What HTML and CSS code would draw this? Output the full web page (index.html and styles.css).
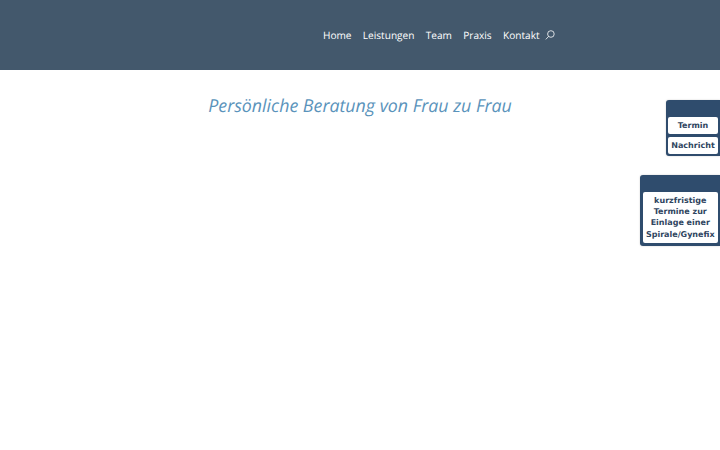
FILE: index.html
```
<!DOCTYPE html>
<html lang="de">
<head>
<meta charset="utf-8">
<title>Praxis</title>
<link rel="stylesheet" href="styles.css">
</head>
<body>
<header class="header">
  <nav class="nav">
    <a>Home</a>
    <a>Leistungen</a>
    <a>Team</a>
    <a>Praxis</a>
    <a>Kontakt</a>
    <svg class="search" width="10" height="10" viewBox="0 0 10 10" fill="none" stroke="#fff" stroke-width="0.8"><circle cx="5.9" cy="4" r="3.3"/><path d="M3.6 6.4 L0.8 9.4"/></svg>
  </nav>
</header>
<main>
  <h1 class="title">Persönliche Beratung von Frau zu Frau</h1>
</main>
<aside class="side side-a">
  <div class="box"><a>Termin</a><a>Nachricht</a></div>
</aside>
<aside class="side side-b">
  <div class="box"><a>kurzfristige Termine zur Einlage einer Spirale/Gynefix</a></div>
</aside>
</body>
</html>
```
FILE: styles.css
```
html, body { margin: 0; padding: 0; }
body { width: 720px; height: 450px; background: #fff; overflow: hidden; position: relative; font-family: "Open Sans", sans-serif; text-rendering: geometricPrecision; }
.header { height: 70px; background: #43586c; display: flex; }
.nav { display: flex; align-items: center; margin-left: 323px; gap: 11.3px; height: 70px; color: #fff; font-size: 10.1px; }
.search { margin-left: -6.3px; }
.title { margin: 24px 0 0; text-align: center; font-size: 17.8px; line-height: 24px; font-weight: 400; font-style: italic; color: #5a93bb; }
.side { position: absolute; right: 0; background: #2f4c6d; border-radius: 3px 0 0 3px; padding: 17px 2px 3px 2.5px; box-shadow: 0 0 2px rgba(0,0,0,.2); }
.side-a { top: 100px; width: 50px; padding-bottom: 2.4px; }
.side-a .box { gap: 2.6px; }
.side-b { top: 175px; width: 75.5px; }
.box { display: flex; flex-direction: column; gap: 2px; }
.box a { background: #fff; border-radius: 2px; color: #2f4560; font-family: "DejaVu Sans", sans-serif; font-weight: 700; font-size: 8px; line-height: 11.2px; text-align: center; padding: 3px 0; }
```
